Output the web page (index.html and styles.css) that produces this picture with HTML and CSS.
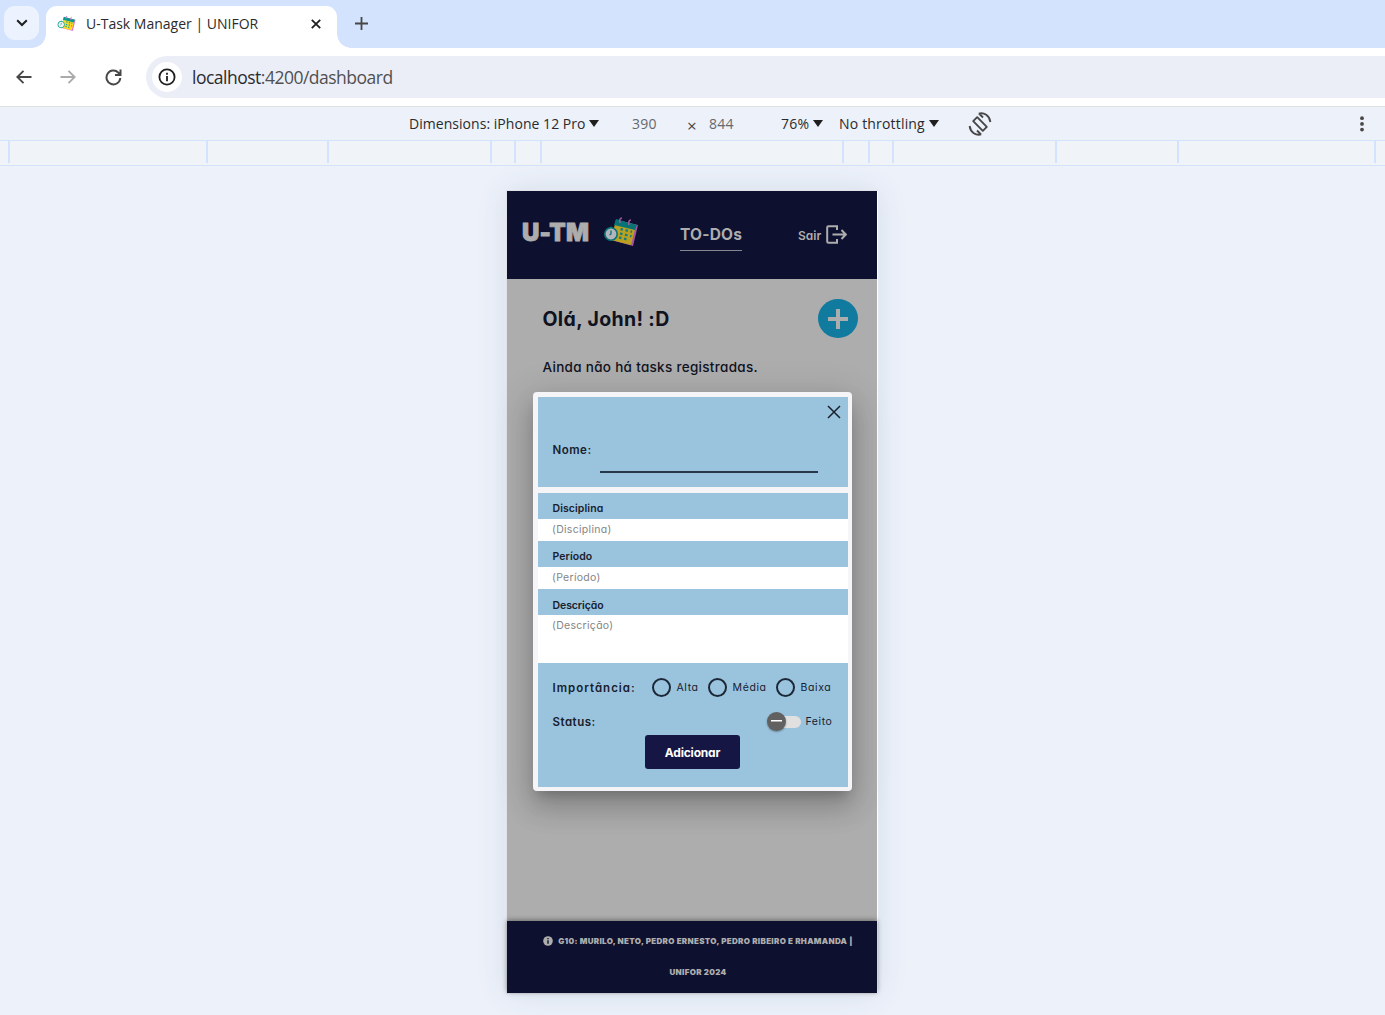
FILE: index.html
```html
<!DOCTYPE html>
<html lang="pt-BR">
<head>
<meta charset="utf-8">
<title>U-Task Manager | UNIFOR</title>
<link rel="stylesheet" href="styles.css">
</head>
<body>
<svg class="defs" width="0" height="0">
  <symbol id="calendar" viewBox="0 0 36 30">
    <path d="M14 3 35 8 30 29 8 23z" fill="#e070d0"/>
    <path d="M13 3 33 8 28 28 8 23z" fill="#ffd91a"/>
    <path d="M13 2 34 8 32 13 11 8z" fill="#079a91"/>
    <path d="M17 6q-1-5 2-5M26 8q-1-5 2-5" fill="none" stroke="#e070d0" stroke-width="1.6"/>
    <path d="M17.500 12l2.500.6m2.500.6 2.500.6m2.500.6 1.500.4M17 16.500l2.500.6m2.500.6 2.500.6m2.500.6 1.500.4M16 20.500l2.500.6m2.500.6 2.500.6" stroke="#1fa79c" stroke-width="2.400"/>
    <circle cx="8" cy="17" r="6.200" fill="#f4f4f4" stroke="#079a91" stroke-width="1.600"/>
    <path d="M8 9.500v1.500M8 13.500v3.500l-1.500 1" fill="none" stroke="#079a91" stroke-width="1.300"/>
  </symbol>
</svg>
<header class="tabs">
  <button class="tab-search"><svg width="12" height="8" viewBox="0 0 12 8"><path d="M1.2 1.2 6 6l4.8-4.8" fill="none" stroke="#1f1f1f" stroke-width="2"/></svg></button>
  <div class="tab">
    <svg class="favicon" width="19" height="17"><use href="#calendar"/></svg>
    <span class="tab-title"><span class="t">U-Task Manager | UNIFOR</span></span>
    <svg width="10" height="10" viewBox="0 0 10 10"><path d="M.8.8l8.4 8.4M9.2.8.8 9.2" stroke="#1f1f1f" stroke-width="1.8"/></svg>
  </div>
  <svg class="new-tab" width="13" height="13" viewBox="0 0 13 13"><path d="M6.5 0v13M0 6.5h13" stroke="#474747" stroke-width="1.8"/></svg>
</header>
<nav class="toolbar">
  <svg class="back" width="16" height="14" viewBox="0 0 16 14"><path d="M15.5 7H1.5M7.5.8 1.3 7l6.2 6.2" fill="none" stroke="#474747" stroke-width="1.9"/></svg>
  <svg class="forward" width="16" height="14" viewBox="0 0 16 14"><path d="M.5 7h14M8.500.8 14.700 7l-6.200 6.200" fill="none" stroke="#ababab" stroke-width="1.9"/></svg>
  <svg class="reload" width="17" height="17" viewBox="0 0 17 17"><path d="M15.300 9A6.900 6.900 0 1 1 13.400 3.700L15.500 5.800M15.500.5v5.500H10" fill="none" stroke="#474747" stroke-width="2"/></svg>
  <div class="omnibox">
    <span class="site-info"><svg width="18" height="18" viewBox="0 0 18 18"><circle cx="9" cy="9" r="7.600" fill="none" stroke="#1f1f1f" stroke-width="1.800"/><path d="M9 8v5.200M9 4.800v1.900" stroke="#1f1f1f" stroke-width="1.800"/></svg></span>
    <span class="url t"><b>localhost</b>:4200/dashboard</span>
  </div>
</nav>
<div class="device-bar">
  <span class="t dims">Dimensions: iPhone 12 Pro</span><i class="caret"></i>
  <span class="t num w">390</span><span class="times">×</span><span class="t num">844</span>
  <span class="t zoom">76%</span><i class="caret"></i>
  <span class="t thr">No throttling</span><i class="caret"></i>
  <svg class="rotate" width="24" height="24" viewBox="0 0 24 24" fill="none" stroke="#474747" stroke-width="1.900"><path d="M9.200 5.200 18.800 14.800 14.800 18.800 5.200 9.200z" stroke-linejoin="round"/><path d="M10.800 1.600C16 .2 21.500 3.500 22.400 10M13.200 22.400C8 23.800 2.500 20.500 1.600 14M11 1.500l4 4M13 22.500l-4-4"/></svg>
  <svg class="more" width="6" height="16" viewBox="0 0 6 16" fill="#474747"><circle cx="3" cy="2.200" r="1.900"/><circle cx="3" cy="7.900" r="1.900"/><circle cx="3" cy="13.600" r="1.900"/></svg>
</div>
<div class="ruler"><i></i><i></i><i></i><i></i><i></i><i></i><i></i><i></i><i></i><i></i><i></i><i></i></div>
<main class="stage">
  <div class="phone">
    <header class="app-head">
      <span class="brand t">U-TM</span>
      <svg class="logo" width="36" height="30"><use href="#calendar"/></svg>
      <span class="todos"><span class="t">TO-DOs</span></span>
      <span class="exit t">Sair</span>
      <svg class="door" width="21" height="19" viewBox="0 0 21 19" fill="none" stroke="#adadad" stroke-width="2"><path d="M11 5V1.200H2.500Q1.200 1.200 1.200 2.500v14q0 1.300 1.300 1.300H11V14M6.500 9.500h13M15.500 5l4.300 4.500-4.300 4.500"/></svg>
    </header>
    <section class="content">
      <div class="greet"><h1 class="t">Olá, John! :D</h1>
        <button class="add"><svg width="20" height="20" viewBox="0 0 20 20"><path d="M10 0v20M0 10h20" stroke="#adadad" stroke-width="4"/></svg></button></div>
      <p class="empty"><span class="t">Ainda não há tasks registradas.</span></p>
    </section>
    <footer class="app-foot">
      <div><svg width="10" height="10" viewBox="0 0 10 10"><circle cx="5" cy="5" r="4.800" fill="#adadad"/><path d="M5 4.300v3.500M5 2v1.300" stroke="#0d102e" stroke-width="1.400"/></svg><span class="t">G10: MURILO, NETO, PEDRO ERNESTO, PEDRO RIBEIRO E RHAMANDA |</span></div>
      <div><span class="t">UNIFOR 2024</span></div>
    </footer>
    <form class="modal">
      <div class="name-row">
        <svg class="close" width="14" height="14" viewBox="0 0 14 14"><path d="M1 1l12 12M13 1 1 13" stroke="#18202e" stroke-width="1.500"/></svg>
        <label class="t lbl">Nome:</label><span class="line"></span>
      </div>
      <div class="field-head"><span class="t">Disciplina</span></div>
      <div class="field"><span class="t">(Disciplina)</span></div>
      <div class="field-head"><span class="t">Período</span></div>
      <div class="field"><span class="t">(Período)</span></div>
      <div class="field-head last"><span class="t">Descrição</span></div>
      <div class="field area"><span class="t">(Descrição)</span></div>
      <div class="options">
        <div class="row"><span class="t lbl imp">Importância:</span>
          <i class="radio"></i><span class="t opt">Alta</span>
          <i class="radio"></i><span class="t opt mid">Média</span>
          <i class="radio"></i><span class="t opt">Baixa</span></div>
        <div class="row status"><span class="t lbl">Status:</span>
          <i class="switch"></i><span class="t opt">Feito</span></div>
        <button class="submit" type="button"><span class="t">Adicionar</span></button>
      </div>
    </form>
  </div>
</main>
</body>
</html>
```
FILE: styles.css
```css
* { box-sizing: border-box; }
body { margin: 0; width: 1385px; height: 1015px; overflow: hidden; background: #ecf1fa; font-family: "Open Sans", sans-serif; color: #1f1f1f; }
.defs { position: absolute; }
.t { display: inline-block; white-space: nowrap; flex: none; }
svg { display: block; flex: none; }
button { border: 0; padding: 0; display: flex; align-items: center; justify-content: center; font: inherit; }
.tabs { height: 48px; background: #d3e3fd; display: flex; padding: 6px 0 0 4px; align-items: flex-start; }
.tab-search { width: 35px; height: 34px; border-radius: 11px; background: #ecf2fe; }
.tab { position: relative; width: 291px; height: 42px; margin-left: 7px; padding: 0 16px 7px 11px; border-radius: 11px 11px 0 0; background: #fff; display: flex; align-items: center; }
.tab::before, .tab::after { content: ""; position: absolute; bottom: 0; width: 14px; height: 14px; }
.tab::before { left: -14px; background: radial-gradient(circle at 0 0, transparent 13.5px, #fff 14px); }
.tab::after { right: -14px; background: radial-gradient(circle at 100% 0, transparent 13.5px, #fff 14px); }
.tab-title { flex: 1; margin-left: 10px; font-size: 14px; color: #2b2b2b; }
.new-tab { margin: 11px 0 0 18px; }
.toolbar { height: 58px; background: #fff; display: flex; align-items: center; padding: 0 0 0 16px; }
.forward { margin-left: 28px; }
.reload { margin-left: 29px; }
.omnibox { flex: 1; height: 42px; margin-left: 24px; padding-left: 6px; border-radius: 21px 0 0 21px; background: #ebeef7; display: flex; align-items: center; }
.site-info { width: 30px; height: 30px; border-radius: 50%; background: #fff; display: flex; align-items: center; justify-content: center; }
.url { margin-left: 10px; font-size: 17.5px; color: #505050; letter-spacing: -.5px; }
.url b { font-weight: 400; color: #2b2b2b; }
.device-bar { height: 35px; border-top: 1px solid #dfe1e0; border-bottom: 1px solid #d3e3fd; padding: 0 20px 0 409px; display: flex; align-items: center; font-size: 14px; color: #2b2b2b; }
.dims { width: 177px; letter-spacing: .04px; }
.caret { border: 5px solid transparent; border-top: 7px solid #1f1f1f; border-bottom: 0; margin-left: 3px; }
.num { width: 25px; color: #66686c; letter-spacing: .3px; }
.w { margin-left: 33px; }
.times { width: 22px; margin-left: 30px; padding-top: 4px; font-size: 17px; line-height: 20px; color: #474747; }
.zoom { width: 29px; margin-left: 47px; letter-spacing: .3px; }
.thr { width: 86px; margin-left: 16px; letter-spacing: .18px; }
.thr + .caret { margin-left: 4px; }
.rotate { margin-left: 29px; }
.more { margin-left: auto; }
.ruler { height: 25px; display: flex; background: #f0f4f9; border-bottom: 1px solid #d3e3fd; }
.ruler i { height: 22px; border-right: 2px solid #d3e3fd; width: 163px; }
.ruler i:nth-child(1) { width: 10px; }
.ruler i:nth-child(2) { width: 198px; }
.ruler i:nth-child(3) { width: 121px; }
.ruler i:nth-child(5), .ruler i:nth-child(9) { width: 24px; }
.ruler i:nth-child(6), .ruler i:nth-child(8) { width: 26px; }
.ruler i:nth-child(7) { width: 302px; }
.ruler i:nth-child(11) { width: 122px; }
.ruler i:nth-child(12) { width: 197px; }
.stage { padding: 25px 0 0 507px; }
.phone { position: relative; width: 370px; height: 802px; background: #adadad; box-shadow: 1px 0 0 #fff, 0 0 0 1px #dfe3e8, 0 0 30px rgba(60,80,100,.12); display: flex; flex-direction: column; font-family: Inter, sans-serif; }
.phone .t { font-feature-settings: "cv11"; }
.app-head { height: 88px; background: #0d102e; color: #adadad; display: flex; align-items: center; padding-left: 15px; }
.brand { width: 67px; font-size: 24px; font-weight: 900; padding-bottom: 6px; letter-spacing: .2px; -webkit-text-stroke: .8px #adadad; }
.logo { margin-left: 14px; margin-bottom: 6px; opacity: .72; }
.todos { width: 62px; margin-left: 41px; border-bottom: 1px solid #85868f; height: 34px; margin-bottom: 2px; padding-top: 1px; font-size: 15.5px; line-height: 34px; font-weight: 700; letter-spacing: .2px; }
.exit { width: 23px; margin: 0 5px 0 56px; font-size: 12px; font-weight: 600; }
.door { margin-bottom: 1px; }
.content { flex: 1; padding: 20px 19px 0 35.5px; color: #10131f; }
.greet { display: flex; justify-content: space-between; align-items: center; }
h1 { margin: 0; font-size: 19.5px; font-weight: 700; letter-spacing: .35px; }
.add { width: 40px; height: 39px; border-radius: 50%; background: #107a9f; }
.empty { margin: 20px 0 0; font-size: 13.5px; line-height: 18px; font-weight: 450; letter-spacing: .3px; }
.app-foot { height: 72px; background: #0d102e; color: #adadad; font-size: 8px; font-weight: 900; box-shadow: 0 -1px 5px rgba(0,0,0,.4); padding: 4px 24px 0 36px; letter-spacing: .31px; }
.app-foot div { height: 31px; display: flex; align-items: center; justify-content: center; }
.app-foot svg { margin-right: 5px; }
.modal { position: absolute; left: 26px; top: 201px; width: 319px; height: 399px; padding: 5px 4.5px; border-radius: 4px; background: #f5f5f7; box-shadow: 0 8px 11px -5px rgba(0,0,0,.2), 0 17px 27px 2px rgba(0,0,0,.14), 0 7px 35px 6px rgba(0,0,0,.12); color: #18202e; }
.name-row { position: relative; height: 90px; background: #9ac4de; margin-bottom: 6px; padding: 45px 15px 0; display: flex; }
.close { position: absolute; right: 6.5px; top: 8px; }
.lbl { font-size: 11.5px; font-weight: 600; line-height: 16px; letter-spacing: .5px; }
.name-row .lbl { width: 39px; }
.line { width: 218px; height: 31px; margin-left: 8px; border-bottom: 2px solid #27384a; }
.field-head { height: 26px; background: #9ac4de; padding: 6px 15px 0; font-size: 10.5px; line-height: 20px; font-weight: 600; letter-spacing: .08px; }
.last { padding-top: 7px; letter-spacing: -.08px; }
.field { height: 22px; background: #fff; padding: 0 14.5px; font-size: 10.5px; line-height: 21px; color: #858585; letter-spacing: .3px; }
.area { height: 48px; }
.options { height: 124px; background: #9ac4de; padding: 14px 15px 0; }
.row { height: 21px; display: flex; align-items: center; }
.imp { width: 83px; margin-right: 7px; letter-spacing: 1px; }
.radio { width: 19px; height: 19px; border: 2px solid #1d2837; border-radius: 50%; margin: 0 5.5px 0 9.5px; }
.opt { font-size: 10.5px; letter-spacing: .6px; }
.mid { width: 34px; }
.status { margin-top: 13px; }
.switch { position: relative; width: 30px; height: 12px; margin: 0 4px 0 auto; border-radius: 6px; background: #e0e0e0; }
.switch::before { content: ""; position: absolute; left: -4px; top: -4px; width: 19px; height: 19px; border-radius: 50%; background: linear-gradient(#fff,#fff) center/11px 1.5px no-repeat #616161; box-shadow: 0 1px 2px rgba(0,0,0,.35); }
.submit { width: 95px; height: 34px; margin: 3px auto 0; border-radius: 3px; background: #161645; color: #fff; font-size: 12px; font-weight: 700; letter-spacing: -.2px; }
```
